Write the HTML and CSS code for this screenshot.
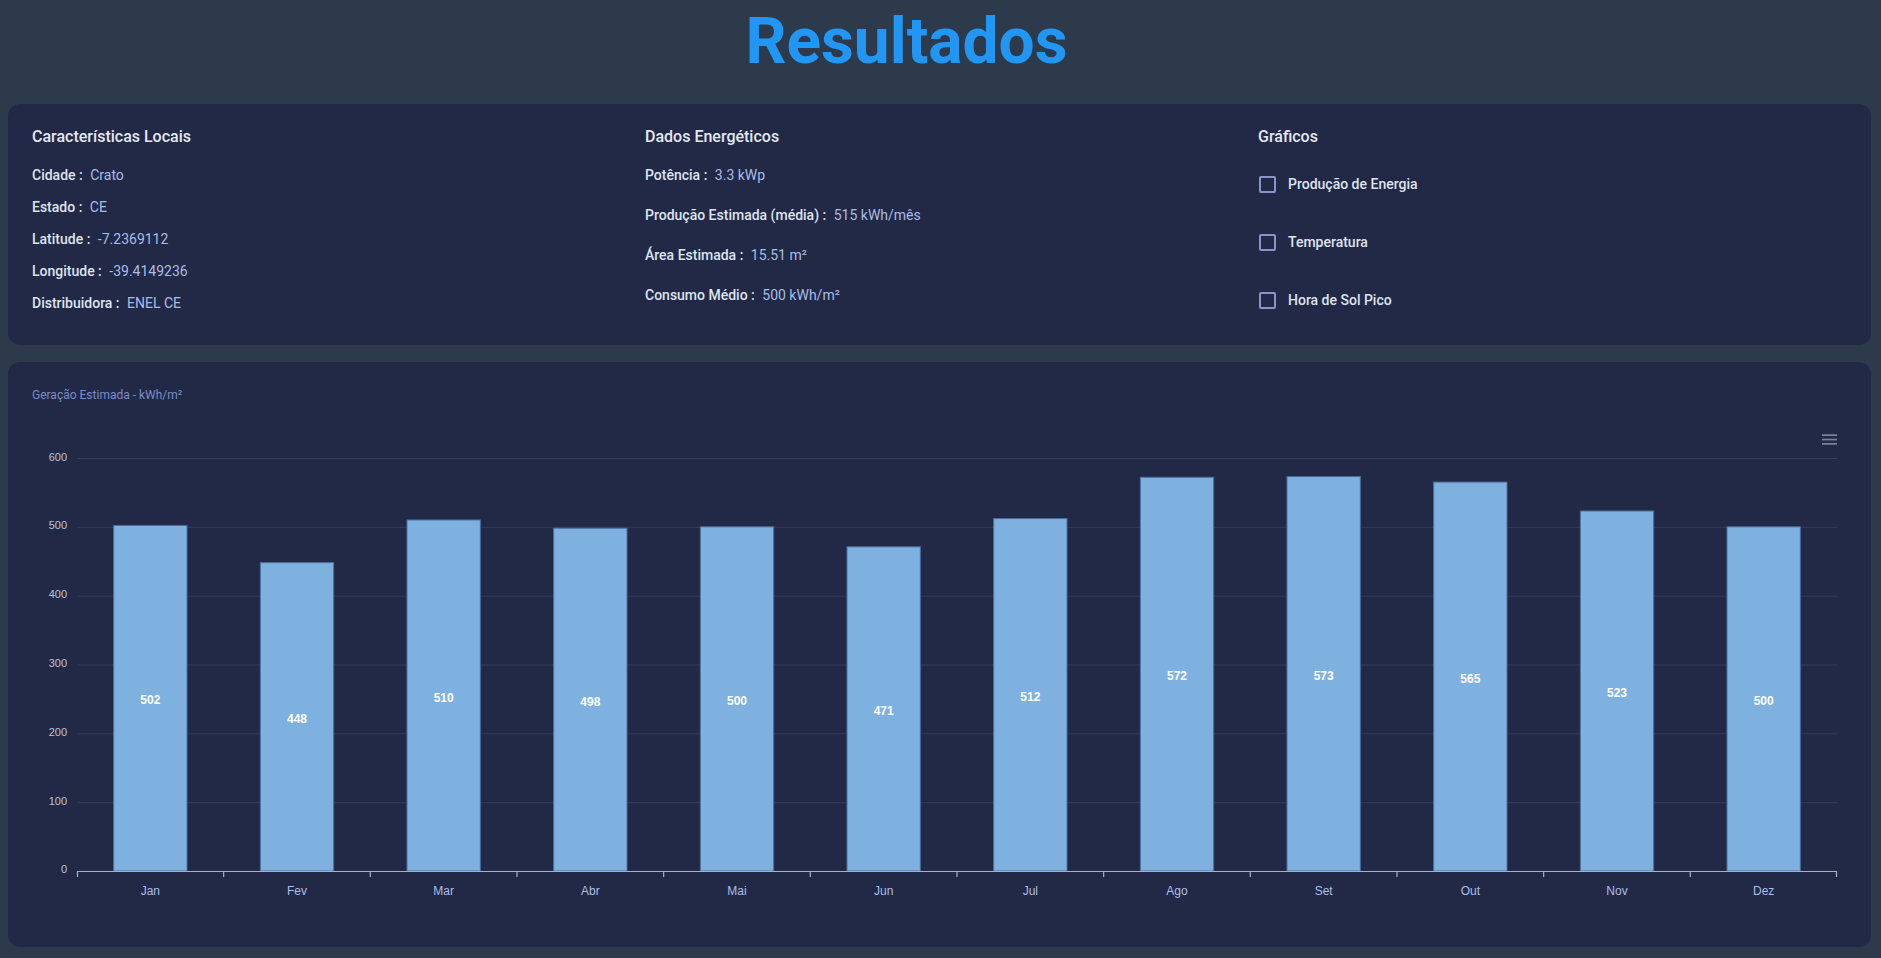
FILE: index.html
```html
<!DOCTYPE html>
<html lang="pt-BR">
<head>
<meta charset="utf-8">
<title>Resultados</title>
<link rel="stylesheet" href="styles.css">
</head>
<body>
<div class="page">
  <h1 class="title">Resultados</h1>

  <section class="card info">
    <div class="col">
      <h2 class="col-title">Características Locais</h2>
      <div class="rows rows-local">
        <div class="row"><span class="k">Cidade :</span> <span class="v">Crato</span></div>
        <div class="row"><span class="k">Estado :</span> <span class="v">CE</span></div>
        <div class="row"><span class="k">Latitude :</span> <span class="v">-7.2369112</span></div>
        <div class="row"><span class="k">Longitude :</span> <span class="v">-39.4149236</span></div>
        <div class="row"><span class="k">Distribuidora :</span> <span class="v">ENEL CE</span></div>
      </div>
    </div>
    <div class="col">
      <h2 class="col-title">Dados Energéticos</h2>
      <div class="rows rows-energy">
        <div class="row"><span class="k">Potência :</span> <span class="v">3.3 kWp</span></div>
        <div class="row"><span class="k">Produção Estimada (média) :</span> <span class="v">515 kWh/mês</span></div>
        <div class="row"><span class="k">Área Estimada :</span> <span class="v">15.51 m²</span></div>
        <div class="row"><span class="k">Consumo Médio :</span> <span class="v">500 kWh/m²</span></div>
      </div>
    </div>
    <div class="col">
      <h2 class="col-title">Gráficos</h2>
      <div class="rows rows-check">
        <label class="check"><span class="box"></span><span>Produção de Energia</span></label>
        <label class="check"><span class="box"></span><span>Temperatura</span></label>
        <label class="check"><span class="box"></span><span>Hora de Sol Pico</span></label>
      </div>
    </div>
  </section>

  <section class="card chart-card">
    <div class="chart-title">Geração Estimada - kWh/m²</div>
    <svg class="chart" width="1815" height="519" viewBox="0 0 1815 519">
      <g class="menu">
        <rect x="1790" y="30.3" width="15" height="1.7"/>
        <rect x="1790" y="34.7" width="15" height="1.7"/>
        <rect x="1790" y="39" width="15" height="1.7"/>
      </g>
      <g class="grid">
        <line x1="45" x2="1805" y1="54.5" y2="54.5"/>
        <line x1="45" x2="1805" y1="123.3" y2="123.3"/>
        <line x1="45" x2="1805" y1="192.2" y2="192.2"/>
        <line x1="45" x2="1805" y1="261" y2="261"/>
        <line x1="45" x2="1805" y1="329.8" y2="329.8"/>
        <line x1="45" x2="1805" y1="398.7" y2="398.7"/>
      </g>
      <g class="ylabels">
        <text x="35" y="56.5">600</text>
        <text x="35" y="125.3">500</text>
        <text x="35" y="194.2">400</text>
        <text x="35" y="263">300</text>
        <text x="35" y="331.8">200</text>
        <text x="35" y="400.7">100</text>
        <text x="35" y="468.5">0</text>
      </g>
      <g class="bars">
        <rect x="81.67" y="121.46" width="73.33" height="345.54"/>
        <rect x="228.33" y="158.63" width="73.33" height="308.37"/>
        <rect x="375" y="115.95" width="73.33" height="351.05"/>
        <rect x="521.67" y="124.21" width="73.33" height="342.79"/>
        <rect x="668.33" y="122.83" width="73.33" height="344.17"/>
        <rect x="815" y="142.8" width="73.33" height="324.2"/>
        <rect x="961.67" y="114.57" width="73.33" height="352.43"/>
        <rect x="1108.33" y="73.27" width="73.33" height="393.73"/>
        <rect x="1255" y="72.59" width="73.33" height="394.41"/>
        <rect x="1401.67" y="78.09" width="73.33" height="388.91"/>
        <rect x="1548.33" y="107" width="73.33" height="360"/>
        <rect x="1695" y="122.83" width="73.33" height="344.17"/>
      </g>
      <g class="dlabels">
        <text x="118.33" y="300.2">502</text>
        <text x="265" y="318.8">448</text>
        <text x="411.67" y="297.5">510</text>
        <text x="558.33" y="301.6">498</text>
        <text x="705" y="300.9">500</text>
        <text x="851.67" y="310.9">471</text>
        <text x="998.33" y="296.8">512</text>
        <text x="1145" y="276.1">572</text>
        <text x="1291.67" y="275.8">573</text>
        <text x="1438.33" y="278.5">565</text>
        <text x="1585" y="293">523</text>
        <text x="1731.67" y="300.9">500</text>
      </g>
      <g class="axis">
        <line x1="45" x2="1805" y1="467.5" y2="467.5"/>
        <line x1="45.5" x2="45.5" y1="467" y2="473"/>
        <line x1="191.67" x2="191.67" y1="467" y2="473"/>
        <line x1="338.33" x2="338.33" y1="467" y2="473"/>
        <line x1="485" x2="485" y1="467" y2="473"/>
        <line x1="631.67" x2="631.67" y1="467" y2="473"/>
        <line x1="778.33" x2="778.33" y1="467" y2="473"/>
        <line x1="925" x2="925" y1="467" y2="473"/>
        <line x1="1071.67" x2="1071.67" y1="467" y2="473"/>
        <line x1="1218.33" x2="1218.33" y1="467" y2="473"/>
        <line x1="1365" x2="1365" y1="467" y2="473"/>
        <line x1="1511.67" x2="1511.67" y1="467" y2="473"/>
        <line x1="1658.33" x2="1658.33" y1="467" y2="473"/>
        <line x1="1804.5" x2="1804.5" y1="467" y2="473"/>
      </g>
      <g class="xlabels">
        <text x="118.33" y="491">Jan</text>
        <text x="265" y="491">Fev</text>
        <text x="411.67" y="491">Mar</text>
        <text x="558.33" y="491">Abr</text>
        <text x="705" y="491">Mai</text>
        <text x="851.67" y="491">Jun</text>
        <text x="998.33" y="491">Jul</text>
        <text x="1145" y="491">Ago</text>
        <text x="1291.67" y="491">Set</text>
        <text x="1438.33" y="491">Out</text>
        <text x="1585" y="491">Nov</text>
        <text x="1731.67" y="491">Dez</text>
      </g>
    </svg>
  </section>
</div>
</body>
</html>
```

FILE: styles.css
```css
* { box-sizing: border-box; }

html, body {
  margin: 0;
  background: #2d3a4b;
  font-family: Roboto, "Noto Sans", "Liberation Sans", sans-serif;
}

.page {
  padding: 10px 10px 0 8px;
}

.title {
  margin: 0 0 30px;
  padding-right: 66px;
  text-align: center;
  font-size: 64px;
  line-height: 64px;
  font-weight: 700;
  color: #2196f3;
}

.card {
  background: #222946;
  border-radius: 12px;
  padding: 24px;
}

.info {
  display: grid;
  grid-template-columns: repeat(3, 1fr);
  column-gap: 24px;
  padding-bottom: 26px;
}

.col-title {
  margin: 0 0 19px;
  font-size: 16px;
  line-height: 18px;
  font-weight: 500;
  color: #e3e8f2;
}

.rows {
  display: flex;
  flex-direction: column;
}

.rows-local { gap: 12px; }
.rows-energy { gap: 20px; }
.rows-check { gap: 20px; }

.row {
  font-size: 14px;
  line-height: 20px;
  white-space: nowrap;
}

.k {
  font-weight: 500;
  color: #dde3f0;
}

.v {
  margin-left: 4px;
  font-weight: 400;
  color: #a8bde6;
}

.check {
  display: flex;
  align-items: center;
  gap: 12px;
  height: 38px;
  font-size: 14px;
  font-weight: 500;
  color: #dde3f0;
}

.box {
  width: 17px;
  height: 17px;
  border: 2px solid #8a95c6;
  border-radius: 2px;
  margin-left: 1px;
}

.chart-card {
  margin-top: 17px;
}

.chart-title {
  font-size: 12px;
  line-height: 18px;
  color: #7a8cc6;
}

.chart {
  display: block;
  font-family: "Liberation Sans", Arial, sans-serif;
}

.menu rect { fill: #79849a; }

.grid line {
  stroke: #343c5f;
  stroke-width: 1;
}

.ylabels text {
  font-size: 11px;
  fill: #b9c4dc;
  text-anchor: end;
}

.bars rect {
  fill: #7eb1df;
  stroke: #4f6e9e;
  stroke-width: 1;
}

.dlabels text {
  font-size: 12px;
  font-weight: 700;
  fill: #ffffff;
  text-anchor: middle;
}

.axis line {
  stroke: #a9b0bf;
  stroke-width: 1.2;
}

.xlabels text {
  font-size: 12px;
  fill: #a9bfe6;
  text-anchor: middle;
}
```
